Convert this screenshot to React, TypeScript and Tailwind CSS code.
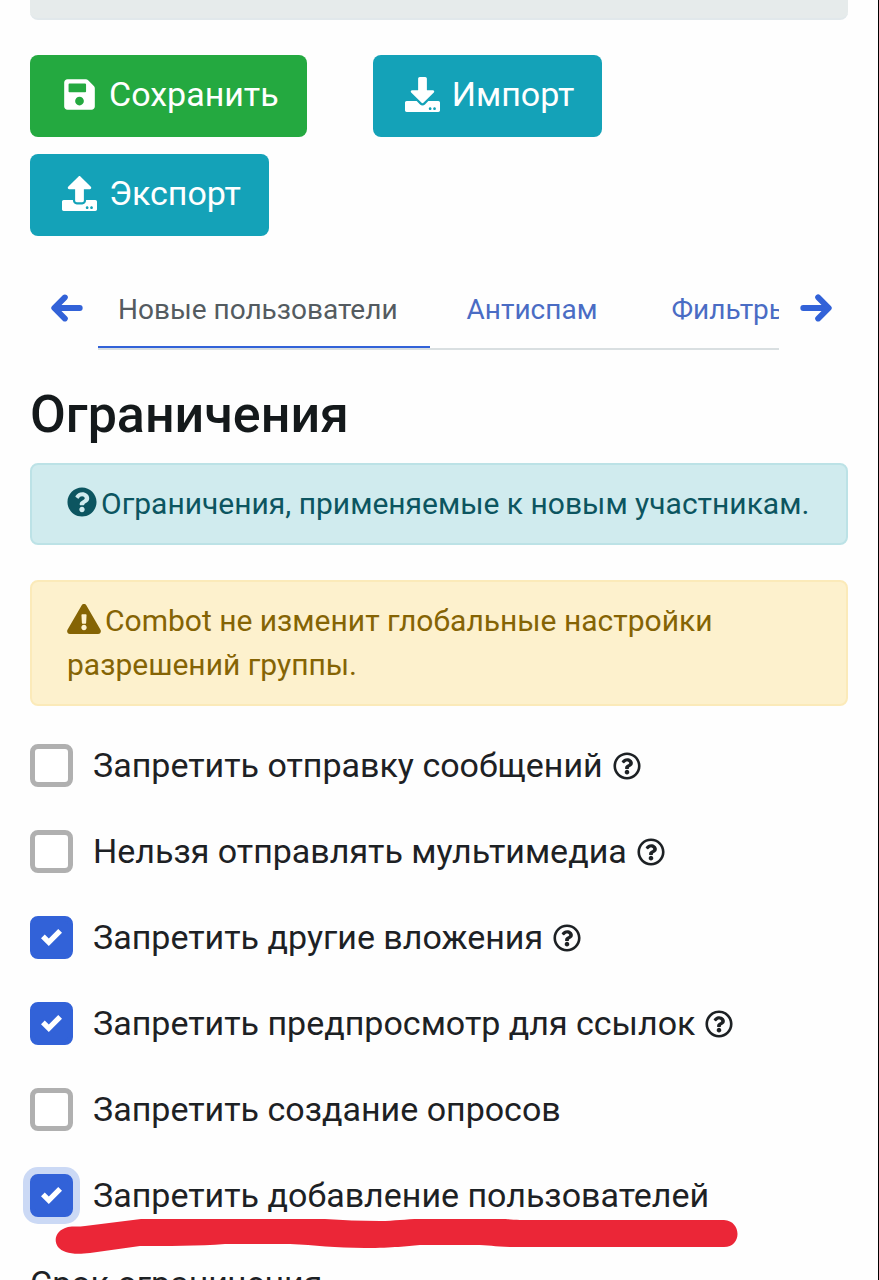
import React from 'react'
import {
  FaDownload,
  FaExclamationTriangle,
  FaQuestionCircle,
  FaRegQuestionCircle,
  FaSave,
  FaUpload,
} from 'react-icons/fa'
import { FaArrowLeft, FaArrowRight } from 'react-icons/fa6'

const actions = [
  { label: 'Сохранить', icon: FaSave, color: 'bg-[#24a940]' },
  { label: 'Импорт', icon: FaDownload, color: 'bg-[#14a2b8]' },
  { label: 'Экспорт', icon: FaUpload, color: 'bg-[#14a2b8]' },
]

const restrictions = [
  { id: 'messages', label: 'Запретить отправку сообщений', checked: false, help: true },
  { id: 'media', label: 'Нельзя отправлять мультимедиа', checked: false, help: true },
  { id: 'other', label: 'Запретить другие вложения', checked: true, help: true },
  { id: 'preview', label: 'Запретить предпросмотр для ссылок', checked: true, help: true },
  { id: 'polls', label: 'Запретить создание опросов', checked: false, help: false },
  { id: 'invite', label: 'Запретить добавление пользователей', checked: true, help: false, marked: true },
]

function CheckRow({ item }: { item: (typeof restrictions)[number] }) {
  return (
    <div className="relative flex h-[43px] items-center gap-5">
      <span className="grid shrink-0 place-items-center">
        <input
          id={item.id}
          type="checkbox"
          defaultChecked={item.checked}
          className={`peer col-start-1 row-start-1 size-[43px] appearance-none rounded-lg border-[5px] border-[#b0b0b0] bg-white checked:border-[#3262d8] checked:bg-[#3262d8] ${
            item.marked ? 'ring-[7px] ring-[#cbd9f5]' : ''
          }`}
        />
        <svg
          viewBox="0 0 8 8"
          className="pointer-events-none invisible col-start-1 row-start-1 size-[21px] text-white peer-checked:visible"
        >
          <path fill="currentColor" d="M6.564.75l-3.59 3.612-1.538-1.55L0 4.26 2.974 7.25 8 2.193z" />
        </svg>
      </span>
      <label htmlFor={item.id} className="flex items-center gap-2.5 whitespace-nowrap text-[34px] leading-[43px]">
        {item.label}
        {item.help && <FaRegQuestionCircle className="size-7" />}
      </label>
      {item.marked && (
        <svg viewBox="0 0 683 36" className="pointer-events-none absolute top-[45px] left-[25px] h-9 w-[683px]">
          <path
            fill="#eb2637"
            d="M13 8C18 7 24 8 30 7L86 0C110 0 140 0 160 -1C185-3 215-3 240-2C270 0 295 2 325 2C340 2 350 0 365 0H420C440-2 445 0 465 1H669C687 2 687 28 669 28H460C440 28 435 26 420 26H365C350 27 340 29 310 29C280 29 260 26 235 25H170C145 27 110 27 85 27L35 34C18 36 8 34 3 28C-2 21 1 11 13 8Z"
          />
        </svg>
      )}
    </div>
  )
}

export default function App() {
  return (
    <div className="h-screen overflow-hidden border-r border-black bg-[#fefefe] px-[30px] font-['Roboto',sans-serif] text-[#1d2124]">
      <div className="h-5 rounded-b-lg border-b-2 border-[#e1e8eb] bg-[#e6ebeb]" />

      <div className="mt-[35px] flex flex-wrap gap-x-[66px] gap-y-[17px] pr-40">
        {actions.map(({ label, icon: Icon, color }) => (
          <button
            key={label}
            type="button"
            className={`flex h-[82px] items-center gap-2 rounded-lg px-7 pb-1 text-[34px] text-white ${color}`}
          >
            <Icon className="w-[43px] text-[35px]" />
            {label}
          </button>
        ))}
      </div>

      <div className="mt-[34px] flex text-[28px] leading-[44px]">
        <button type="button" aria-label="Назад" className="flex h-[76px] w-[68px] items-center pl-5 text-[#3262d8]">
          <FaArrowLeft strokeWidth={24} className="size-[34px] overflow-visible" />
        </button>
        <nav className="flex h-20 min-w-0 flex-1 overflow-hidden border-b-2 border-[#d9dfe1] whitespace-nowrap">
          <a href="#new" className="-mb-px flex items-center border-b-[3px] border-[#3262d8] pt-1 pr-8 pl-5 text-[#545b60]">
            Новые пользователи
          </a>
          <a href="#antispam" className="flex items-center px-[37px] pt-0.5 text-[#4a6cc4]">
            Антиспам
          </a>
          <a href="#filters" className="flex items-center px-[37px] pt-0.5 text-[#4a6cc4]">
            Фильтры
          </a>
        </nav>
        <button type="button" aria-label="Вперёд" className="flex h-[76px] w-[69px] items-center pl-5 text-[#3262d8]">
          <FaArrowRight strokeWidth={24} className="size-[34px] overflow-visible" />
        </button>
      </div>

      <h2 className="mt-[35px] text-[52px] leading-[60px] font-medium text-[#14191b]">Ограничения</h2>

      <div className="mt-[18px] rounded-lg border-2 border-[#bce2e6] bg-[#d0ebee] px-[35px] py-[17px] text-[30px] leading-[44px] text-[#0c5560]">
        <FaQuestionCircle className="mr-1 inline-block align-[-3px]" />
        Ограничения, применяемые к новым участникам.
      </div>

      <div className="mt-[35px] rounded-lg border-2 border-[#fbeab9] bg-[#fdf1cd] px-[35px] py-[17px] text-[30px] leading-[44px] text-[#856404]">
        <FaExclamationTriangle className="mr-1 inline-block h-[30px] w-[34px] align-[-3px]" />
        Combot не изменит глобальные настройки разрешений группы.
      </div>

      <div className="mt-[38px] flex flex-col gap-[43px]">
        {restrictions.map((item) => (
          <CheckRow key={item.id} item={item} />
        ))}
      </div>

      <p className="mt-[41px] text-[34px] leading-[51px]">Срок ограничения</p>
    </div>
  )
}
